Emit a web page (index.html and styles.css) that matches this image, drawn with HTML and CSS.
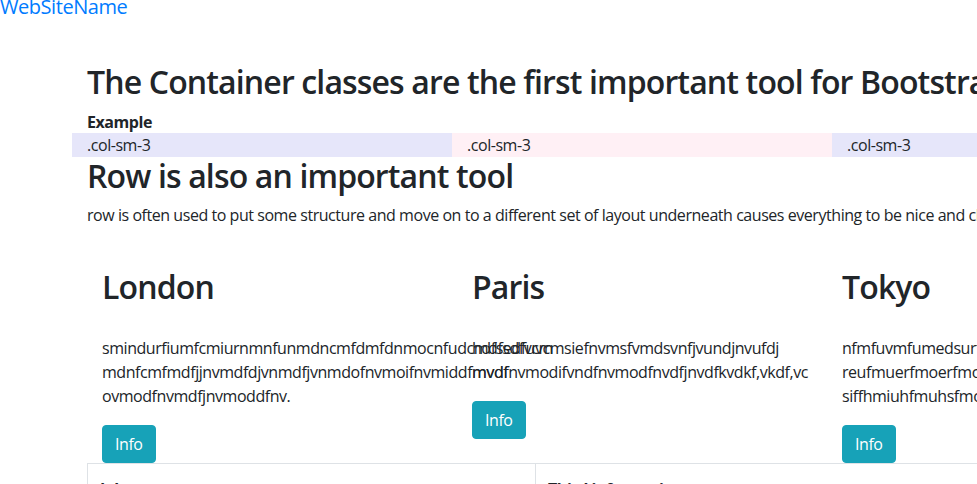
FILE: index.html
```html
<!DOCTYPE html>
<html lang="en">
<head>
<meta charset="utf-8">
<title>Bootstrap Example</title>
<link rel="stylesheet" href="styles.css">
</head>
<body>
<nav class="navbar"><a class="brand" href="#">WebSiteName</a></nav>

<div class="container">
  <h1 class="title">The Container classes are the first important tool for Bootstrap</h1>
  <p class="example">Example</p>
  <div class="grid-row">
    <div class="col lav">.col-sm-3</div>
    <div class="col blush">.col-sm-3</div>
    <div class="col lav">.col-sm-3</div>
    <div class="col blush">.col-sm-3</div>
  </div>
  <h2 class="title sub">Row is also an important tool</h2>
  <p class="lead-text">row is often used to put some structure and move on to a different set of layout underneath causes everything to be nice and clean for everyone.</p>
</div>

<div class="container">
  <div class="cards">
    <div class="card-col">
      <h2 class="city">London</h2>
      <p class="city-text">smindurfiumfcmiurnmnfunmdncmfdmfdnmocnfudcmdfsdfvcm mdnfcmfmdfjjnvmdfdjvnmdfjvnmdofnvmoifnvmiddfmvdf ovmodfnvmdfjnvmoddfnv.</p>
      <button class="btn">Info</button>
    </div>
    <div class="card-col">
      <h2 class="city">Paris</h2>
      <p class="city-text">hdfsedfuvcmsiefnvmsfvmdsvnfjvundjnvufdj mvdfnvmodifvndfnvmodfnvdfjnvdfkvdkf,vkdf,vc</p>
      <button class="btn">Info</button>
    </div>
    <div class="card-col">
      <h2 class="city">Tokyo</h2>
      <p class="city-text">nfmfuvmfumedsurfmvdfnvmdfnvmdkfnvmdfkvnmdkf reufmuerfmoerfmojdfnvmodfnvmdofvnmdofnvmdo siffhmiuhfmuhsfmovdmfvnmdfovnmdfovnmdfvnm.</p>
      <button class="btn">Info</button>
    </div>
  </div>
  <table class="info-table">
    <thead>
      <tr>
        <th class="c1">Johnson</th>
        <th class="c2">Third information</th>
      </tr>
    </thead>
    <tbody>
      <tr>
        <td>John</td>
        <td>Doe</td>
      </tr>
    </tbody>
  </table>
</div>
</body>
</html>
```

FILE: styles.css
```css
html {
  overflow: hidden;
}

body {
  margin: 0;
  font-family: "Open Sans", "Noto Sans", sans-serif;
  font-size: 16px;
  line-height: 1.5;
  color: #212529;
  background: #ffffff;
  letter-spacing: -0.45px;
}

.navbar {
  height: 14px;
}

.brand {
  display: block;
  font-size: 20px;
  line-height: 14px;
  color: #007bff;
  text-decoration: none;
}

.container {
  width: 1490px;
  margin-left: 72px;
  padding: 0 15px;
}

.title {
  font-size: 32px;
  font-weight: 600;
  line-height: 1.2;
  letter-spacing: -0.86px;
  margin: 49px 0 7px;
  white-space: nowrap;
}

.title.sub {
  margin: 0 0 7px;
}

.example {
  font-weight: 700;
  line-height: 22px;
  padding-top: 3px;
  margin: 0;
}

.grid-row {
  display: flex;
  margin: 0 -15px;
}

.col {
  flex: none;
  width: 380px;
  box-sizing: border-box;
  padding: 0 15px;
}

.lav {
  background: #e6e6fa;
}

.blush {
  background: #fff0f5;
}

.lead-text {
  margin: 0 0 16px;
  white-space: nowrap;
}

.cards {
  display: flex;
  align-items: flex-start;
}

.card-col {
  flex: none;
  width: 370px;
  box-sizing: border-box;
  padding: 25px 15px 0;
  display: flex;
  flex-direction: column;
  align-items: flex-start;
}

.city {
  font-size: 32px;
  font-weight: 600;
  line-height: 1.2;
  letter-spacing: -0.86px;
  margin: 0 0 30px;
}

.city-text {
  align-self: stretch;
  margin: 0 0 17px;
}

.btn {
  font: inherit;
  letter-spacing: inherit;
  color: #ffffff;
  background: #17a2b8;
  border: 1px solid #17a2b8;
  border-radius: 4px;
  padding: 6px 12px;
  line-height: 24px;
}

.info-table {
  border-collapse: separate;
  border-spacing: 0;
  table-layout: fixed;
  width: 1110px;
  border-right: 1px solid #dee2e6;
  border-bottom: 1px solid #dee2e6;
}

.info-table th,
.info-table td {
  border-top: 1px solid #dee2e6;
  border-left: 1px solid #dee2e6;
  padding: 12px;
  text-align: left;
}

.info-table th {
  font-weight: 700;
  padding-top: 13px;
}

.info-table .c1 {
  width: 448px;
  box-sizing: border-box;
}
```
